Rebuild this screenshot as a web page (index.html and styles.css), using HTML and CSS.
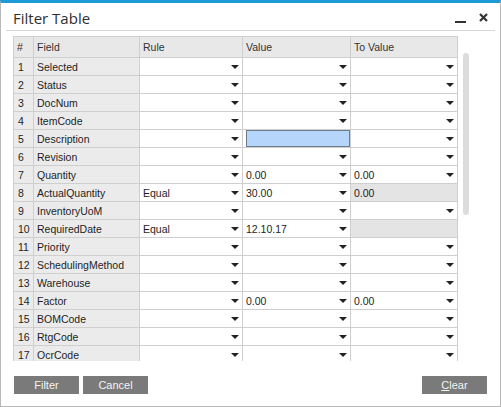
FILE: index.html
```html
<!DOCTYPE html>
<html>
<head>
    <link rel="stylesheet" href="styles.css">
    <title>Filter Table</title>
</head>
<body>
<div class="window">
    <div class="titlebar">
        <span class="title">Filter Table</span>
        <div class="winbtns">
            <span class="minimize"></span>
            <svg class="close" width="9" height="9" viewBox="0 0 9 9">
                <path d="M1 1 L8 8 M8 1 L1 8" stroke="#333" stroke-width="2.2"/>
            </svg>
        </div>
    </div>
    <div class="sep"></div>

    <div class="gridArea">
        <div class="gridWrap">
            <table class="grid">
                <colgroup>
                    <col class="cNum"><col class="cField"><col class="cRule"><col class="cValue"><col class="cTo">
                </colgroup>
                <tr class="head">
                    <th>#</th><th>Field</th><th>Rule</th><th>Value</th><th>To Value</th>
                </tr>
                <tr><td class="num">1</td><td class="fld">Selected</td><td><div class="dd"><span></span><i></i></div></td><td><div class="dd"><span></span><i></i></div></td><td><div class="dd"><span></span><i></i></div></td></tr>
                <tr><td class="num">2</td><td class="fld">Status</td><td><div class="dd"><span></span><i></i></div></td><td><div class="dd"><span></span><i></i></div></td><td><div class="dd"><span></span><i></i></div></td></tr>
                <tr><td class="num">3</td><td class="fld">DocNum</td><td><div class="dd"><span></span><i></i></div></td><td><div class="dd"><span></span><i></i></div></td><td><div class="dd"><span></span><i></i></div></td></tr>
                <tr><td class="num">4</td><td class="fld">ItemCode</td><td><div class="dd"><span></span><i></i></div></td><td><div class="dd"><span></span><i></i></div></td><td><div class="dd"><span></span><i></i></div></td></tr>
                <tr><td class="num">5</td><td class="fld">Description</td><td><div class="dd"><span></span><i></i></div></td><td><div class="edit"></div></td><td><div class="dd"><span></span><i></i></div></td></tr>
                <tr><td class="num">6</td><td class="fld">Revision</td><td><div class="dd"><span></span><i></i></div></td><td><div class="dd"><span></span><i></i></div></td><td><div class="dd"><span></span><i></i></div></td></tr>
                <tr><td class="num">7</td><td class="fld">Quantity</td><td><div class="dd"><span></span><i></i></div></td><td><div class="dd"><span>0.00</span><i></i></div></td><td><div class="dd"><span>0.00</span><i></i></div></td></tr>
                <tr><td class="num">8</td><td class="fld">ActualQuantity</td><td><div class="dd"><span>Equal</span><i></i></div></td><td><div class="dd"><span>30.00</span><i></i></div></td><td class="off"><div class="dd"><span>0.00</span></div></td></tr>
                <tr><td class="num">9</td><td class="fld">InventoryUoM</td><td><div class="dd"><span></span><i></i></div></td><td><div class="dd"><span></span><i></i></div></td><td><div class="dd"><span></span><i></i></div></td></tr>
                <tr><td class="num">10</td><td class="fld">RequiredDate</td><td><div class="dd"><span>Equal</span><i></i></div></td><td><div class="dd"><span>12.10.17</span><i></i></div></td><td class="off"><div class="dd"><span></span></div></td></tr>
                <tr><td class="num">11</td><td class="fld">Priority</td><td><div class="dd"><span></span><i></i></div></td><td><div class="dd"><span></span><i></i></div></td><td><div class="dd"><span></span><i></i></div></td></tr>
                <tr><td class="num">12</td><td class="fld">SchedulingMethod</td><td><div class="dd"><span></span><i></i></div></td><td><div class="dd"><span></span><i></i></div></td><td><div class="dd"><span></span><i></i></div></td></tr>
                <tr><td class="num">13</td><td class="fld">Warehouse</td><td><div class="dd"><span></span><i></i></div></td><td><div class="dd"><span></span><i></i></div></td><td><div class="dd"><span></span><i></i></div></td></tr>
                <tr><td class="num">14</td><td class="fld">Factor</td><td><div class="dd"><span></span><i></i></div></td><td><div class="dd"><span>0.00</span><i></i></div></td><td><div class="dd"><span>0.00</span><i></i></div></td></tr>
                <tr><td class="num">15</td><td class="fld">BOMCode</td><td><div class="dd"><span></span><i></i></div></td><td><div class="dd"><span></span><i></i></div></td><td><div class="dd"><span></span><i></i></div></td></tr>
                <tr><td class="num">16</td><td class="fld">RtgCode</td><td><div class="dd"><span></span><i></i></div></td><td><div class="dd"><span></span><i></i></div></td><td><div class="dd"><span></span><i></i></div></td></tr>
                <tr><td class="num">17</td><td class="fld">OcrCode</td><td><div class="dd"><span></span><i></i></div></td><td><div class="dd"><span></span><i></i></div></td><td><div class="dd"><span></span><i></i></div></td></tr>
            </table>
        </div>
        <div class="scrollTrack"><div class="thumb"></div></div>
    </div>

    <div class="footer">
        <button class="btn">Filter</button>
        <button class="btn">Cancel</button>
        <button class="btn right"><u>C</u>lear</button>
    </div>
</div>
</body>
</html>
```

FILE: styles.css
```css
body{
    margin: 0;
    background-color: #ffffff;
    font-family: "Liberation Sans", Arial, sans-serif;
}

.window{
    width: 501px;
    height: 407px;
    box-sizing: border-box;
    border-top: 3px solid #1d9ad6;
    border-left: 1px solid #b8b8b8;
    border-right: 1px solid #b8b8b8;
    border-bottom: 1px solid #b8b8b8;
    background-color: white;
}

.titlebar{
    height: 27px;
    display: flex;
    align-items: center;
    padding-left: 12px;
    padding-right: 12px;
}

.title{
    font-family: "Open Sans", sans-serif;
    font-size: 15px;
    color: #303030;
    padding-top: 2px;
}

.winbtns{
    margin-left: auto;
    display: flex;
    align-items: flex-start;
    gap: 13px;
    padding-top: 3px;
}

.minimize{
    width: 11px;
    height: 2px;
    background-color: #333;
    margin-top: 8px;
}

.sep{
    margin: 0 5px;
    border-bottom: 1px solid #d6d6d6;
}

.gridArea{
    display: flex;
    padding-left: 12px;
    margin-top: 5px;
}

.gridWrap{
    height: 325px;
    overflow: hidden;
}

.grid{
    border-collapse: collapse;
    table-layout: fixed;
    width: 444px;
    font-size: 10.5px;
    color: #1e1e1e;
}

.cNum{ width: 20px; }
.cField{ width: 106px; }
.cRule{ width: 103px; }
.cValue{ width: 108px; }
.cTo{ width: 107px; }

.grid th, .grid td{
    border: 1px solid #cfcfcf;
    padding: 0;
    white-space: nowrap;
    overflow: hidden;
}

.grid th{
    height: 20px;
    background-color: #e8e8e8;
    font-weight: normal;
    text-align: left;
    padding-left: 3px;
    color: #333;
}

.grid td{
    height: 17px;
}

.num{
    background-color: #ebebeb;
    padding-left: 4px !important;
}

.fld{
    background-color: #ebebeb;
    padding-left: 3px !important;
}

.off{
    background-color: #e4e4e4;
}

.dd{
    display: flex;
    align-items: center;
    height: 17px;
    padding-left: 3px;
    padding-right: 3px;
}

.dd span{
    flex: 1;
}

.dd i{
    width: 0;
    height: 0;
    border-left: 4px solid transparent;
    border-right: 4px solid transparent;
    border-top: 4px solid #222;
}

.edit{
    margin-left: 3px;
    height: 15px;
    background-color: #b5d5fb;
    border: 1px solid #6d7b8a;
}

.scrollTrack{
    width: 6px;
    margin-left: 5px;
    padding-top: 17px;
}

.thumb{
    height: 162px;
    background-color: #dcdcdc;
    border-radius: 3px;
}

.footer{
    display: flex;
    gap: 4px;
    padding-left: 13px;
    padding-right: 13px;
    margin-top: 15px;
}

.btn{
    width: 65px;
    height: 18px;
    background-color: #7a7a7a;
    color: #f4f4f4;
    border: none;
    font-family: "Liberation Sans", Arial, sans-serif;
    font-size: 11px;
    padding: 0;
}

.right{
    margin-left: auto;
}
```
